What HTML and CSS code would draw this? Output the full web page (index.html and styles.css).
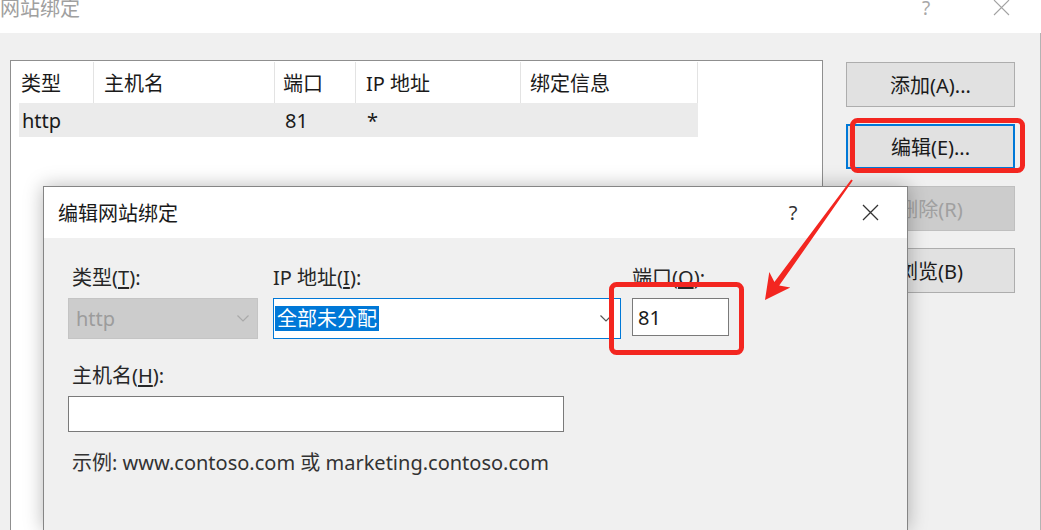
FILE: index.html
```html
<!DOCTYPE html>
<html lang="zh-CN">
<head>
<meta charset="utf-8">
<title>网站绑定</title>
<link rel="stylesheet" href="styles.css">
</head>
<body>
<div class="back">
  <div class="back-title">
    <span class="title">网站绑定</span>
    <span class="help">?</span>
    <svg class="close" width="17" height="17" viewBox="0 0 17 17"><path d="M1 1 L16 16 M16 1 L1 16" stroke="#a3a3a3" stroke-width="1.1" fill="none"/></svg>
  </div>
  <div class="back-body">
    <div class="listbox">
      <div class="lv-head">
        <div class="lv-c c1">类型</div>
        <div class="lv-c c2">主机名</div>
        <div class="lv-c c3">端口</div>
        <div class="lv-c c4">IP 地址</div>
        <div class="lv-c c5">绑定信息</div>
      </div>
      <div class="lv-row">
        <div class="lv-r r1">http</div>
        <div class="lv-r r2"></div>
        <div class="lv-r r3">81</div>
        <div class="lv-r r4">*</div>
        <div class="lv-r r5"></div>
      </div>
    </div>
    <div class="btncol">
      <div class="btn">添加(A)...</div>
      <div class="btn focused">编辑(E)...</div>
      <div class="btn disabled">删除(R)</div>
      <div class="btn">浏览(B)</div>
    </div>
  </div>
</div>

<div class="front">
  <div class="front-title">
    <span class="title">编辑网站绑定</span>
    <span class="help">?</span>
    <svg class="close" width="17" height="17" viewBox="0 0 17 17"><path d="M1 1 L16 16 M16 1 L1 16" stroke="#333" stroke-width="1.3" fill="none"/></svg>
  </div>
  <div class="front-body">
    <div class="fields">
      <div class="field f-type">
        <div class="label ind">类型(<u>T</u>):</div>
        <div class="select disabled">
          <span class="val">http</span>
          <svg class="chev" width="12" height="7" viewBox="0 0 12 7"><path d="M0.5 0.5 L6 6 L11.5 0.5" stroke="#a9a9a9" stroke-width="1.2" fill="none"/></svg>
        </div>
      </div>
      <div class="field f-ip">
        <div class="label">IP 地址(<u>I</u>):</div>
        <div class="select active">
          <span class="sel">全部未分配</span>
          <svg class="chev" width="12" height="7" viewBox="0 0 12 7"><path d="M0.5 0.5 L6 6 L11.5 0.5" stroke="#555" stroke-width="1.2" fill="none"/></svg>
        </div>
      </div>
      <div class="field f-port">
        <div class="label">端口(<u>O</u>):</div>
        <div class="input port">81</div>
      </div>
    </div>
    <div class="label ind host-label">主机名(<u>H</u>):</div>
    <div class="input host"></div>
    <div class="example">示例: www.contoso.com 或 marketing.contoso.com</div>
  </div>
</div>

<svg class="annot" width="1041" height="530" viewBox="0 0 1041 530">
  <rect x="852.5" y="120.5" width="170" height="50" rx="5" ry="5" fill="none" stroke="#f32620" stroke-width="5"/>
  <rect x="611.5" y="284.5" width="130" height="68" rx="5" ry="5" fill="none" stroke="#f32620" stroke-width="5"/>
  <polygon points="852.8,180.6 779.2,285.6 790.3,287.5 765,300 769.3,272.1 774.4,282.0 851.2,179.4" fill="#f32620"/>
</svg>
</body>
</html>
```

FILE: styles.css
```css
* {
  box-sizing: border-box;
  margin: 0;
  padding: 0;
}

html, body {
  width: 1041px;
  height: 530px;
  overflow: hidden;
}

body {
  position: relative;
  background: #f0f0f0;
  font-family: "Noto Sans", "Noto Sans CJK SC", sans-serif;
  font-size: 20px;
  color: #1e1e1e;
}

/* ---------- background window ---------- */
.back {
  width: 1041px;
  height: 530px;
  display: flex;
  flex-direction: column;
}

.back-title {
  height: 33px;
  background: #fff;
  display: flex;
  align-items: flex-start;
  padding-right: 31px;
}

.back-title .title {
  flex: 1;
  color: #a0a0a0;
  font-size: 20px;
  line-height: 17px;
  height: 17px;
}

.back-title .help {
  width: 20px;
  text-align: center;
  color: #a8a8a8;
  font-size: 19px;
  line-height: 17px;
  height: 17px;
  margin-right: 57px;
}

.back-title .close {
  margin-top: -1px;
}

.back-body {
  flex: 1;
  display: flex;
  gap: 23px;
  padding: 27px 0 0 10px;
  border-right: 1px solid #b3b3b3;
}

.listbox {
  width: 813px;
  background: #fff;
  border: 1px solid #8f8f8f;
  border-bottom: none;
  padding-top: 1px;
}

.lv-head {
  display: flex;
  height: 41px;
  align-items: stretch;
}

.lv-c {
  display: flex;
  align-items: center;
  padding-left: 10px;
  border-right: 1px solid #e3e3e3;
  color: #1a1a1a;
}

.c1 { width: 83px; }
.c2 { width: 181px; }
.c3 { width: 81px; padding-left: 8px; }
.c4 { width: 165px; }
.c5 { width: 177px; padding-left: 9px; }

.lv-row {
  display: flex;
  margin-left: 8px;
  width: 679px;
  height: 34px;
  background: #ebebeb;
}

.lv-r {
  display: flex;
  align-items: center;
  padding-left: 10px;
  color: #1a1a1a;
}

.r1 { width: 75px; padding-left: 3px; }
.r2 { width: 181px; }
.r3 { width: 81px; }
.r4 { width: 165px; padding-left: 11px; }
.r5 { width: 177px; }

.btncol {
  width: 169px;
  display: flex;
  flex-direction: column;
  gap: 17px;
  padding-top: 2px;
}

.btn {
  height: 45px;
  display: flex;
  align-items: center;
  justify-content: center;
  background: #e1e1e1;
  border: 1px solid #adadad;
  color: #1a1a1a;
}

.btn.focused {
  border: 2px solid #0078d7;
}

.btn.disabled {
  background: #cccccc;
  border-color: #bfbfbf;
  color: #a0a0a0;
}

/* ---------- foreground dialog ---------- */
.front {
  position: absolute;
  left: 43px;
  top: 186px;
  width: 865px;
  height: 344px;
  background: #f0f0f0;
  border: 1px solid #858585;
  border-bottom: none;
  box-shadow: 0 0 18px rgba(0, 0, 0, 0.28);
  display: flex;
  flex-direction: column;
}

.front-title {
  height: 51px;
  flex: none;
  background: #fff;
  display: flex;
  align-items: center;
  padding-left: 14px;
  padding-right: 28px;
}

.front-title .title {
  flex: 1;
  font-size: 20px;
  color: #1a1a1a;
}

.front-title .help {
  width: 20px;
  text-align: center;
  font-size: 20px;
  color: #333;
  margin-right: 59px;
}

.front-body {
  padding: 28px 0 0 24px;
}

.fields {
  display: flex;
  align-items: flex-start;
}

.field {
  display: flex;
  flex-direction: column;
}

.f-type { width: 190px; margin-right: 15px; }
.f-ip { width: 348px; margin-right: 11px; }
.f-port { width: 97px; }

.label {
  line-height: 24px;
  height: 24px;
  margin-bottom: 8px;
  color: #262626;
  white-space: nowrap;
}

.label.ind {
  padding-left: 4px;
}

.label u {
  text-underline-offset: 2px;
}

.select {
  height: 41px;
  display: flex;
  align-items: center;
  border: 1px solid #c4c4c4;
  padding-right: 8px;
}

.select.disabled {
  background: #cccccc;
  color: #9c9c9c;
}

.select .val {
  flex: 1;
  padding-left: 7px;
}

.select.active {
  background: #fff;
  border-color: #0078d7;
}

.select .sel {
  margin-left: 1px;
  height: 25px;
  line-height: 25px;
  padding: 0 2px 0 2px;
  background: #0078d7;
  color: #fff;
}

.select.active .chev {
  margin-left: auto;
}

.input {
  background: #fff;
  border: 1px solid #7a7a7a;
}

.input.port {
  height: 38px;
  display: flex;
  align-items: center;
  padding-left: 5px;
  color: #1a1a1a;
}

.host-label {
  margin-top: 25px;
}

.input.host {
  width: 496px;
  height: 36px;
}

.example {
  margin-top: 19px;
  padding-left: 4px;
  line-height: 24px;
  color: #333;
}

/* ---------- annotation overlay ---------- */
.annot {
  position: absolute;
  left: 0;
  top: 0;
  pointer-events: none;
}
```
